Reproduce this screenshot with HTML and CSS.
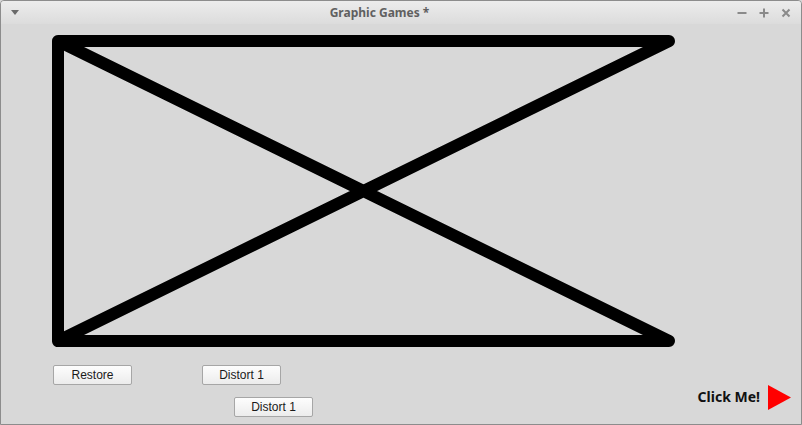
FILE: index.html
```html
<!DOCTYPE html>
<html lang="en">
<head>
    <meta charset="UTF-8">
    <title>Graphic Games *</title>
    <link rel="stylesheet" href="styles.css">
</head>
<body>

<div class="window">
    <div class="titlebar">
        <span class="menu-arrow"></span>
        <span class="title">Graphic Games *</span>
        <div class="win-buttons">
            <svg width="12" height="12" viewBox="0 0 12 12"><rect x="1.5" y="5" width="9" height="2" fill="#8a8a8a"/></svg>
            <svg width="12" height="12" viewBox="0 0 12 12"><rect x="1.5" y="5" width="9" height="2" fill="#8a8a8a"/><rect x="5" y="1.5" width="2" height="9" fill="#8a8a8a"/></svg>
            <svg width="12" height="12" viewBox="0 0 12 12"><path d="M2.5 2.5 L9.5 9.5 M9.5 2.5 L2.5 9.5" stroke="#8a8a8a" stroke-width="2"/></svg>
        </div>
    </div>

    <div class="content">
        <svg class="drawing" width="800" height="341" viewBox="0 0 800 341">
            <polyline points="57,17 668,17 57,317 668,317 57,17 57,317"
                      fill="none" stroke="#000" stroke-width="12"
                      stroke-linejoin="round" stroke-linecap="round"/>
        </svg>

        <div class="row row-top">
            <button class="btn">Restore</button>
            <button class="btn btn-far">Distort 1</button>
        </div>

        <div class="row row-bottom">
            <button class="btn btn-shift">Distort 1</button>
            <div class="click-me">
                <span>Click Me!</span>
                <svg width="23" height="25" viewBox="0 0 23 25"><polygon points="0,0 23,12.5 0,25" fill="#ff0000"/></svg>
            </div>
        </div>
    </div>
</div>

</body>
</html>
```

FILE: styles.css
```css
body {
    margin: 0;
    background-color: #d8d8d8;
    font-family: 'Liberation Sans', Arial, sans-serif;
}

.window {
    width: 802px;
    height: 425px;
    box-sizing: border-box;
    border: 1px solid #8c8c8c;
    border-radius: 4px 4px 0 0;
    display: flex;
    flex-direction: column;
    overflow: hidden;
    background-color: #d8d8d8;
}

.titlebar {
    height: 23px;
    display: flex;
    align-items: center;
    position: relative;
    background: linear-gradient(#ececec, #dcdcdc);
}

.menu-arrow {
    margin-left: 10px;
    width: 0;
    height: 0;
    border-left: 4px solid transparent;
    border-right: 4px solid transparent;
    border-top: 5px solid #6a6a6a;
}

.title {
    position: absolute;
    left: 0;
    right: 0;
    text-align: center;
    font-family: 'Noto Sans', sans-serif;
    font-weight: bold;
    font-size: 12px;
    color: #606060;
    margin-left: -43px;
}

.win-buttons {
    margin-left: auto;
    margin-right: 9px;
    display: flex;
    gap: 10px;
}

.win-buttons svg {
    display: block;
}

.content {
    flex: 1;
    display: flex;
    flex-direction: column;
}

.drawing {
    display: block;
}

.row {
    display: flex;
    height: 20px;
}

.row-top {
    padding-left: 52px;
}

.row-bottom {
    margin-top: 12px;
    padding-left: 233px;
    padding-right: 10px;
}

.btn {
    width: 79px;
    height: 20px;
    padding: 0;
    font-family: 'Liberation Sans', Arial, sans-serif;
    font-size: 12px;
    color: #1a1a1a;
    background: linear-gradient(#fdfdfd, #ececec);
    border: 1px solid #a6a6a6;
    border-radius: 2px;
}

.btn-far {
    margin-left: 70px;
}

.click-me {
    margin-left: auto;
    align-self: flex-end;
    margin-bottom: 7px;
    height: 25px;
    display: flex;
    align-items: center;
    gap: 8px;
}

.click-me span {
    font-family: 'Noto Sans', sans-serif;
    font-weight: bold;
    font-size: 14px;
    color: #111;
    margin-top: -3px;
}

.click-me svg {
    display: block;
}
```
